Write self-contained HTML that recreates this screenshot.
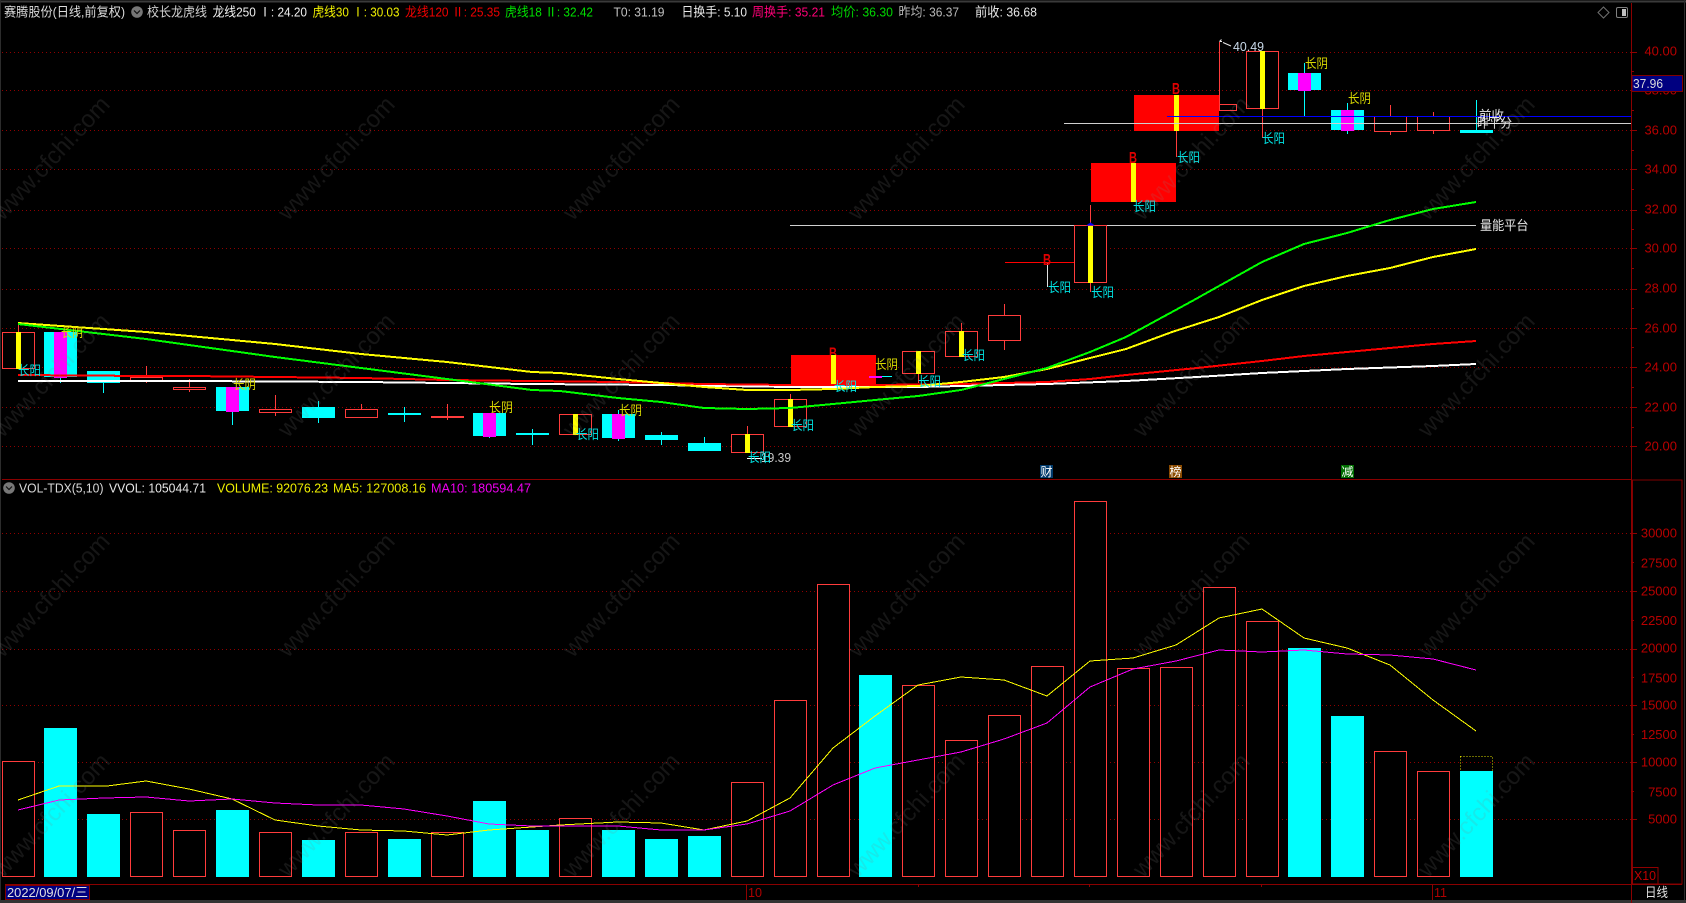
<!DOCTYPE html>
<html><head><meta charset="utf-8"><title>赛腾股份</title>
<style>
html,body{margin:0;padding:0;background:#000;width:1686px;height:903px;overflow:hidden}
svg{display:block;position:absolute;left:0;top:0}
text{font-family:"Liberation Sans","Noto Sans CJK SC",sans-serif;font-size:13px;white-space:pre}
.h{fill:#000;stroke:#ff3c3c;stroke-width:1}
.c{fill:#0ff}.m{fill:#f0f}.y{fill:#ff0}.r{fill:#f00}
.ay{font-size:13px;fill:#b80000;text-anchor:end}
.ly{fill:#d8d800}.la{fill:#00e4e4}
.b{fill:#e00000;font-size:16px;font-weight:bold}
.wm{font-size:24px;fill:rgba(128,128,128,.17);text-anchor:middle}
</style></head><body>
<svg width="1686" height="903" viewBox="0 0 1686 903" xmlns="http://www.w3.org/2000/svg">
<rect width="1686" height="903" fill="#000"/>
<!-- frame -->
<path d="M0 1H1686M0 2H1686" stroke="#3a3a3a" fill="none"/>
<path d="M0.5 0V903M1684.5 0V903" stroke="#2c2c2c" fill="none"/>
<rect x="0" y="900" width="1686" height="3" fill="#333"/>
<!-- grids -->
<g shape-rendering="crispEdges">
<path d="M2 52.5H1631M2 90.5H1631M2 130.5H1631M2 169.5H1631M2 210.5H1631M2 248.5H1631M2 289.5H1631M2 328.5H1631M2 367.5H1631M2 407.5H1631M2 446.5H1631M2 533.5H1631M2 591.5H1631M2 649.5H1631M2 705.5H1631M2 762.5H1631M2 819.5H1631" stroke="#900000" stroke-dasharray="1 3" fill="none"/>
<!-- axis and panes -->
<path d="M1631.5 3V903" stroke="#8a0000" fill="none"/>
<path d="M2 479.5H1632" stroke="#8a0000" fill="none"/>
<rect x="1632.5" y="480" width="49.5" height="404" fill="none" stroke="#800000" stroke-width="1.4"/>
<path d="M5 884.5H1682" stroke="#8a0000" fill="none"/>
<path d="M1631 52.5h6M1631 130.5h6M1631 169.5h6M1631 210.5h6M1631 248.5h6M1631 289.5h6M1631 328.5h6M1631 367.5h6M1631 407.5h6M1631 446.5h6M1631 71.5h3M1631 110.5h3M1631 150.5h3M1631 189.5h3M1631 229.5h3M1631 268.5h3M1631 308.5h3M1631 347.5h3M1631 387.5h3M1631 427.5h3M1631 533.5h6M1631 591.5h6M1631 649.5h6M1631 705.5h6M1631 762.5h6M1631 819.5h6M1631 562.5h3M1631 620.5h3M1631 677.5h3M1631 734.5h3M1631 791.5h3" stroke="#900000" fill="none"/>
<path d="M746.5 884V900M1432.5 884V900M918.5 884v3M1089.5 884v3M1261.5 884v3" stroke="#900000" fill="none"/>
<!-- horizontal platform lines -->
<path d="M790 225.5H1476M1064 123.5H1631" stroke="#d0d0d0" fill="none"/>
<!-- volume bars -->
<rect class="h" x="2.5" y="761.5" width="32" height="115"/>
<rect class="c" x="44" y="728" width="33" height="149"/>
<rect class="c" x="87" y="814" width="33" height="63"/>
<rect class="h" x="130.5" y="812.5" width="32" height="64"/>
<rect class="h" x="173.5" y="830.5" width="32" height="46"/>
<rect class="c" x="216" y="810" width="33" height="67"/>
<rect class="h" x="259.5" y="832.5" width="32" height="44"/>
<rect class="c" x="302" y="840" width="33" height="37"/>
<rect class="h" x="345.5" y="832.5" width="32" height="44"/>
<rect class="c" x="388" y="839" width="33" height="38"/>
<rect class="h" x="431.5" y="832.5" width="32" height="44"/>
<rect class="c" x="473" y="801" width="33" height="76"/>
<rect class="c" x="516" y="830" width="33" height="47"/>
<rect class="h" x="559.5" y="818.5" width="32" height="58"/>
<rect class="c" x="602" y="830" width="33" height="47"/>
<rect class="c" x="645" y="839" width="33" height="38"/>
<rect class="c" x="688" y="836" width="33" height="41"/>
<rect class="h" x="731.5" y="782.5" width="32" height="94"/>
<rect class="h" x="774.5" y="700.5" width="32" height="176"/>
<rect class="h" x="817.5" y="584.5" width="32" height="292"/>
<rect class="c" x="859" y="675" width="33" height="202"/>
<rect class="h" x="902.5" y="685.5" width="32" height="191"/>
<rect class="h" x="945.5" y="740.5" width="32" height="136"/>
<rect class="h" x="988.5" y="715.5" width="32" height="161"/>
<rect class="h" x="1031.5" y="666.5" width="32" height="210"/>
<rect class="h" x="1074.5" y="501.5" width="32" height="375"/>
<rect class="h" x="1117.5" y="668.5" width="32" height="208"/>
<rect class="h" x="1160.5" y="667.5" width="32" height="209"/>
<rect class="h" x="1203.5" y="587.5" width="32" height="289"/>
<rect class="h" x="1246.5" y="621.5" width="32" height="255"/>
<rect class="c" x="1288" y="648" width="33" height="229"/>
<rect class="c" x="1331" y="716" width="33" height="161"/>
<rect class="h" x="1374.5" y="751.5" width="32" height="125"/>
<rect class="h" x="1417.5" y="771.5" width="32" height="105"/>
<rect x="1460.5" y="756.5" width="32" height="15" fill="none" stroke="#d8d800" stroke-dasharray="1 2"/>
<rect class="c" x="1460" y="771" width="33" height="106"/>
</g>
<!-- volume MAs -->
<g fill="none" stroke-width="1" shape-rendering="crispEdges">
<polyline stroke="#ffff00" points="18,800 59,786 107,786 146,781 189,789 232,799 275,820 318,826 361,830 404,831 447,835 489,830 532,827 560,825 618,822 661,823 704,830 747,821 790,798 833,748 875,716 918,685 961,677 1004,680 1047,696 1090,661 1133,658 1176,645 1219,618 1262,609 1304,638 1347,648 1390,665 1433,700 1476,731"/>
<polyline stroke="#ff00ff" points="18,810 59,800 104,798 146,797 189,801 232,799 275,803 318,805 361,805 404,809 447,816 489,824 532,826 560,826 618,826 661,830 704,830 747,824 790,811 833,785 875,768 918,760 961,752 1004,739 1047,723 1090,687 1133,669 1176,661 1219,650 1262,652 1304,650 1347,654 1390,655 1433,659 1476,670"/>
</g>
<!-- candles: wicks -->
<g fill="none" shape-rendering="crispEdges">
<path stroke="#ff3c3c" d="M18.5 323V332M146.5 366V383M189.5 379V392M275.5 395V416M361.5 404V418M447.5 404V420M575.5 414V435M747.5 426V453M790.5 394V400M918.5 373V383M961.5 323V332M1004.5 304V316M1004.5 340V350M1090.5 205V226M1090.5 282V292M1176.5 130V157M1219.5 42V110M1262.5 108V138M1390.5 105V135M1433.5 112V134"/>
<path stroke="#00ffff" d="M60.5 376V383M103.5 382V393M232.5 411V425M318.5 401V423M404.5 407V422M489.5 436V438M532.5 429V445M618.5 410V441M661.5 432V445M704.5 437V444M1304.5 63V117M1347.5 103V134M1476.5 100V131"/>
</g>
<text class="b" x="829" y="358.500" textLength="8" lengthAdjust="spacingAndGlyphs">B</text>
<g shape-rendering="crispEdges">
<rect class="h" x="2.5" y="332.5" width="32" height="36"/><rect class="y" x="16" y="332" width="5" height="37"/>
<rect class="c" x="44" y="332" width="33" height="45"/><rect class="m" x="54" y="332" width="13" height="46"/>
<rect class="c" x="87" y="371" width="33" height="12"/>
<rect class="h" x="130.5" y="377.5" width="32" height="3"/>
<rect class="h" x="173.5" y="387.5" width="32" height="2"/>
<rect class="c" x="216" y="387" width="33" height="24"/><rect class="m" x="226" y="387" width="13" height="25"/>
<rect class="h" x="259.5" y="409.5" width="32" height="3"/>
<rect class="c" x="302" y="407" width="33" height="11"/>
<rect class="h" x="345.5" y="409.5" width="32" height="8"/>
<rect class="c" x="388" y="413" width="33" height="2"/>
<rect x="431" y="416" width="33" height="2" fill="#ff3c3c"/>
<rect class="c" x="473" y="413" width="33" height="23"/><rect class="m" x="483" y="413" width="13" height="24"/>
<rect class="c" x="516" y="433" width="33" height="2"/>
<rect class="h" x="559.5" y="414.5" width="32" height="20"/><rect class="y" x="573" y="414" width="5" height="21"/>
<rect class="c" x="602" y="414" width="33" height="24"/><rect class="m" x="612" y="414" width="13" height="25"/>
<rect class="c" x="645" y="435" width="33" height="5"/>
<rect class="c" x="688" y="443" width="33" height="8"/>
<rect class="h" x="731.5" y="434.5" width="32" height="18"/><rect class="y" x="745" y="434" width="5" height="19"/>
<rect class="h" x="774.5" y="399.5" width="32" height="27"/><rect class="y" x="788" y="399" width="5" height="28"/>
<rect class="r" x="791" y="355" width="85" height="30"/><rect class="y" x="831" y="355" width="5" height="30"/>
<rect class="m" x="869" y="376" width="13" height="2"/><rect class="c" x="882" y="376" width="10" height="1"/>
<rect class="h" x="902.5" y="351.5" width="32" height="22"/><rect class="y" x="916" y="351" width="5" height="23"/>
<rect class="h" x="945.5" y="331.5" width="32" height="25"/><rect class="y" x="959" y="331" width="5" height="26"/>
<rect class="h" x="988.5" y="315.5" width="32" height="25"/>
<path d="M1005 262.5H1074" stroke="#f00" fill="none" stroke-width="1"/>
<path d="M1047.5 263V287" stroke="#e0e0e0" fill="none"/>
<rect class="h" x="1074.5" y="225.5" width="32" height="57"/><rect class="y" x="1088" y="226" width="5" height="57"/>
<path d="M1086 225.5h9l-4.500 -3z" fill="#0000ff"/>
<rect class="r" x="1091" y="163" width="85" height="39"/><rect class="y" x="1131" y="163" width="5" height="39"/>
<rect class="h" x="1219.500" y="104.500" width="17" height="6"/>
<rect class="r" x="1134" y="95" width="85" height="36"/><rect class="y" x="1174" y="95" width="5" height="36"/>
<rect class="h" x="1246.5" y="51.5" width="32" height="57"/><rect class="y" x="1260" y="51" width="5" height="58"/>
<rect class="c" x="1288" y="73" width="33" height="17"/><rect class="m" x="1298" y="73" width="13" height="18"/>
<rect class="c" x="1331" y="110" width="33" height="20"/><rect class="m" x="1341" y="110" width="13" height="21"/>
<rect class="h" x="1374.5" y="116.5" width="32" height="15"/>
<rect class="h" x="1417.5" y="116.5" width="32" height="14"/>
<rect class="c" x="1460" y="130" width="33" height="3"/>
<path d="M1167 116.500H1631" stroke="#0000ff" fill="none"/>
<path d="M1064 123.500H1631" stroke="#d0d0d0" fill="none"/>
</g>
<!-- price MAs -->
<g fill="none" stroke-width="2" shape-rendering="crispEdges">
<polyline stroke="#fff" points="18,381 189,381 361,382 532,384 661,385 790,387 918,387 1004,385 1047,384 1126,381 1197,377 1262,373 1347,369 1433,366 1476,364"/>
<polyline stroke="#f00" points="18,375 146,376 189,376 275,377 361,378 447,380 532,381 618,382 661,383 704,384 790,385 875,385 961,384 1047,382 1090,379 1126,375 1197,368 1262,361 1304,356 1347,352 1390,348 1433,344 1476,341"/>
<polyline stroke="#ff0" points="18,323 146,332 275,344 361,354 447,362 532,372 560,373 618,379 661,383 704,387 747,390 790,390 833,389 875,387 918,386 961,382 1004,377 1047,369 1090,358 1126,349 1172,332 1219,317 1262,300 1304,286 1347,276 1390,268 1433,257 1476,249"/>
<polyline stroke="#0f0" points="18,324 146,339 275,357 361,368 447,379 532,390 560,391 618,398 661,402 704,408 747,409 790,408 833,404 875,400 918,396 961,390 1004,379 1047,368 1090,352 1126,337 1172,312 1194,300 1262,262 1304,244 1347,233 1390,220 1433,209 1476,202"/>
</g>
<!-- labels -->
<g>
<text class="la" x="18" y="375" textLength="23" lengthAdjust="spacingAndGlyphs">长阳</text>
<text class="ly" x="61" y="337" textLength="22" lengthAdjust="spacingAndGlyphs">长阴</text>
<text class="ly" x="233" y="389" textLength="23" lengthAdjust="spacingAndGlyphs">长阴</text>
<text class="ly" x="489" y="412" textLength="24" lengthAdjust="spacingAndGlyphs">长阴</text>
<text class="la" x="576" y="439" textLength="23" lengthAdjust="spacingAndGlyphs">长阳</text>
<text class="ly" x="619" y="415" textLength="23" lengthAdjust="spacingAndGlyphs">长阴</text>
<path d="M747 458.500H762" stroke="#fff" fill="none"/>
<text x="761" y="462" fill="#c8c8c8" textLength="30" lengthAdjust="spacingAndGlyphs">19.39</text>
<text class="la" x="748" y="462" textLength="23" lengthAdjust="spacingAndGlyphs">长阳</text>
<text class="la" x="791" y="430" textLength="23" lengthAdjust="spacingAndGlyphs">长阳</text>
<text class="la" x="834" y="391" textLength="23" lengthAdjust="spacingAndGlyphs">长阳</text>
<text class="ly" x="875" y="369" textLength="23" lengthAdjust="spacingAndGlyphs">长阴</text>
<text class="la" x="918" y="386" textLength="23" lengthAdjust="spacingAndGlyphs">长阳</text>
<text class="la" x="962" y="360" textLength="23" lengthAdjust="spacingAndGlyphs">长阳</text>
<text class="b" x="1043" y="265" textLength="8" lengthAdjust="spacingAndGlyphs">B</text>
<text class="la" x="1048" y="292" textLength="23" lengthAdjust="spacingAndGlyphs">长阳</text>
<text class="la" x="1091" y="297" textLength="23" lengthAdjust="spacingAndGlyphs">长阳</text>
<text class="b" x="1129" y="163" textLength="8" lengthAdjust="spacingAndGlyphs">B</text>
<text class="la" x="1133" y="211" textLength="23" lengthAdjust="spacingAndGlyphs">长阳</text>
<text class="b" x="1172" y="94" textLength="8" lengthAdjust="spacingAndGlyphs">B</text>
<text class="la" x="1177" y="162" textLength="23" lengthAdjust="spacingAndGlyphs">长阳</text>
<text class="la" x="1262" y="143" textLength="23" lengthAdjust="spacingAndGlyphs">长阳</text>
<text class="ly" x="1305" y="68" textLength="23" lengthAdjust="spacingAndGlyphs">长阴</text>
<text class="ly" x="1348" y="103" textLength="23" lengthAdjust="spacingAndGlyphs">长阴</text>
<path d="M1219.500 41.500h2.500M1219.500 41.500l2 -2M1223 42.500l8 3.500" stroke="#e8e8e8" fill="none"/>
<text x="1233" y="51" fill="#c8d8e8" textLength="31" lengthAdjust="spacingAndGlyphs">40.49</text>
<text x="1479" y="120" fill="#e8e8e8" textLength="25" lengthAdjust="spacingAndGlyphs">前收</text>
<text x="1477" y="127.500" fill="#e8e8e8" textLength="35" lengthAdjust="spacingAndGlyphs">昨平分</text>
<text x="1480" y="230" fill="#e8e8e8" textLength="48.500" lengthAdjust="spacingAndGlyphs">量能平台</text>
<rect x="1040" y="465" width="13" height="13" fill="#003a6c"/><text x="1040.500" y="476" fill="#fff" style="font-size:12px">财</text>
<rect x="1169" y="465" width="13" height="13" fill="#8a4a00"/><text x="1169.500" y="476" fill="#fff" style="font-size:12px">榜</text>
<rect x="1341" y="465" width="13" height="13" fill="#006e00"/><text x="1341.500" y="476" fill="#fff" style="font-size:12px">减</text>
</g>
<!-- axis labels -->
<g>
<text class="ay" x="1677" y="55.500">40.00</text>
<text class="ay" x="1677" y="94.500">38.00</text>
<text class="ay" x="1677" y="134.500">36.00</text>
<text class="ay" x="1677" y="173.500">34.00</text>
<text class="ay" x="1677" y="213.500">32.00</text>
<text class="ay" x="1677" y="252.500">30.00</text>
<text class="ay" x="1677" y="292.500">28.00</text>
<text class="ay" x="1677" y="332.500">26.00</text>
<text class="ay" x="1677" y="371.500">24.00</text>
<text class="ay" x="1677" y="411.500">22.00</text>
<text class="ay" x="1677" y="450.500">20.00</text>
<text class="ay" x="1677" y="537.500">30000</text>
<text class="ay" x="1677" y="567.500">27500</text>
<text class="ay" x="1677" y="595.500">25000</text>
<text class="ay" x="1677" y="625">22500</text>
<text class="ay" x="1677" y="652.500">20000</text>
<text class="ay" x="1677" y="682.500">17500</text>
<text class="ay" x="1677" y="709.500">15000</text>
<text class="ay" x="1677" y="739">12500</text>
<text class="ay" x="1677" y="766.500">10000</text>
<text class="ay" x="1677" y="796.500">7500</text>
<text class="ay" x="1677" y="823.500">5000</text>
<rect x="1632" y="75.500" width="50.500" height="16" fill="#000080" stroke="#800000"/>
<text x="1633" y="88" fill="#dcdcdc" textLength="30" lengthAdjust="spacingAndGlyphs">37.96</text>
<rect x="1632.500" y="867.500" width="25.500" height="16.500" fill="#000" stroke="#900000"/>
<text x="1634" y="880" fill="#c00000" textLength="22" lengthAdjust="spacingAndGlyphs">X10</text>
<rect x="5.500" y="885.500" width="84" height="14" fill="#000080" stroke="#800000"/>
<text x="7" y="897" fill="#e0e0e0" textLength="81" lengthAdjust="spacingAndGlyphs">2022/09/07/三</text>
<text x="748" y="897" fill="#b00000" textLength="14" lengthAdjust="spacingAndGlyphs">10</text>
<text x="1434" y="897" fill="#b00000" textLength="13" lengthAdjust="spacingAndGlyphs">11</text>
<text x="1645" y="897" fill="#e0e0e0" textLength="23" lengthAdjust="spacingAndGlyphs">日线</text>
</g>
<!-- header -->
<g>
<text x="4" y="16.500" fill="#dcdcdc" textLength="121" lengthAdjust="spacingAndGlyphs">赛腾股份(日线,前复权)</text>
<circle cx="137" cy="12" r="5.800" fill="#777"/><path d="M134 10.500l3 3 3-3" stroke="#111" stroke-width="1.200" fill="none"/>
<text x="147" y="16.500" fill="#d0d0d0" textLength="60" lengthAdjust="spacingAndGlyphs">校长龙虎线</text>
<text x="212.500" y="16.500" fill="#f0f0f0" textLength="94.500" lengthAdjust="spacingAndGlyphs">龙线250 Ⅰ: 24.20</text>
<text x="312.500" y="16.500" fill="#f0f000" textLength="87" lengthAdjust="spacingAndGlyphs">虎线30 Ⅰ: 30.03</text>
<text x="405" y="16.500" fill="#f00000" textLength="95" lengthAdjust="spacingAndGlyphs">龙线120 Ⅱ: 25.35</text>
<text x="505" y="16.500" fill="#00e000" textLength="88" lengthAdjust="spacingAndGlyphs">虎线18 Ⅱ: 32.42</text>
<text x="613.500" y="16.500" fill="#c0c0c0" textLength="51" lengthAdjust="spacingAndGlyphs">T0: 31.19</text>
<text x="681.500" y="16.500" fill="#e8e8e8" textLength="65.500" lengthAdjust="spacingAndGlyphs">日换手: 5.10</text>
<text x="752" y="16.500" fill="#ff0078" textLength="73" lengthAdjust="spacingAndGlyphs">周换手: 35.21</text>
<text x="831" y="16.500" fill="#00d800" textLength="62" lengthAdjust="spacingAndGlyphs">均价: 36.30</text>
<text x="898.500" y="16.500" fill="#b8b8b8" textLength="60.500" lengthAdjust="spacingAndGlyphs">昨均: 36.37</text>
<text x="975" y="16.500" fill="#e8e8e8" textLength="62" lengthAdjust="spacingAndGlyphs">前收: 36.68</text>
<path d="M1603.500 7l5.500 5.500-5.500 5.500-5.500-5.500z" fill="none" stroke="#707070"/>
<rect x="1616.500" y="7.500" width="11" height="10" rx="1.500" fill="none" stroke="#808080"/>
<rect x="1622" y="9" width="4" height="7" fill="#c0c0c0"/>
<circle cx="9" cy="488" r="5.800" fill="#777"/><path d="M6 486.500l3 3 3-3" stroke="#111" stroke-width="1.200" fill="none"/>
<text x="19" y="492.500" fill="#d8d8d8" textLength="84.500" lengthAdjust="spacingAndGlyphs">VOL-TDX(5,10)</text>
<text x="109" y="492.500" fill="#e8e8e8" textLength="97" lengthAdjust="spacingAndGlyphs">VVOL: 105044.71</text>
<text x="217" y="492.500" fill="#f0f000" textLength="111" lengthAdjust="spacingAndGlyphs">VOLUME: 92076.23</text>
<text x="333" y="492.500" fill="#e8e800" textLength="93" lengthAdjust="spacingAndGlyphs">MA5: 127008.16</text>
<text x="431" y="492.500" fill="#f000f0" textLength="100" lengthAdjust="spacingAndGlyphs">MA10: 180594.47</text>
</g>
<!-- watermark -->
<g>
<text class="wm" transform="translate(57 163.500) rotate(-47)">www.cfchi.com</text>
<text class="wm" transform="translate(342 163.500) rotate(-47)">www.cfchi.com</text>
<text class="wm" transform="translate(627 163.500) rotate(-47)">www.cfchi.com</text>
<text class="wm" transform="translate(912 163.500) rotate(-47)">www.cfchi.com</text>
<text class="wm" transform="translate(1197 163.500) rotate(-47)">www.cfchi.com</text>
<text class="wm" transform="translate(1482 163.500) rotate(-47)">www.cfchi.com</text>
<text class="wm" transform="translate(57 380.500) rotate(-47)">www.cfchi.com</text>
<text class="wm" transform="translate(342 380.500) rotate(-47)">www.cfchi.com</text>
<text class="wm" transform="translate(627 380.500) rotate(-47)">www.cfchi.com</text>
<text class="wm" transform="translate(912 380.500) rotate(-47)">www.cfchi.com</text>
<text class="wm" transform="translate(1197 380.500) rotate(-47)">www.cfchi.com</text>
<text class="wm" transform="translate(1482 380.500) rotate(-47)">www.cfchi.com</text>
<text class="wm" transform="translate(57 600.500) rotate(-47)">www.cfchi.com</text>
<text class="wm" transform="translate(342 600.500) rotate(-47)">www.cfchi.com</text>
<text class="wm" transform="translate(627 600.500) rotate(-47)">www.cfchi.com</text>
<text class="wm" transform="translate(912 600.500) rotate(-47)">www.cfchi.com</text>
<text class="wm" transform="translate(1197 600.500) rotate(-47)">www.cfchi.com</text>
<text class="wm" transform="translate(1482 600.500) rotate(-47)">www.cfchi.com</text>
<text class="wm" transform="translate(57 820.500) rotate(-47)">www.cfchi.com</text>
<text class="wm" transform="translate(342 820.500) rotate(-47)">www.cfchi.com</text>
<text class="wm" transform="translate(627 820.500) rotate(-47)">www.cfchi.com</text>
<text class="wm" transform="translate(912 820.500) rotate(-47)">www.cfchi.com</text>
<text class="wm" transform="translate(1197 820.500) rotate(-47)">www.cfchi.com</text>
<text class="wm" transform="translate(1482 820.500) rotate(-47)">www.cfchi.com</text>
</g>
</svg>
</body></html>
